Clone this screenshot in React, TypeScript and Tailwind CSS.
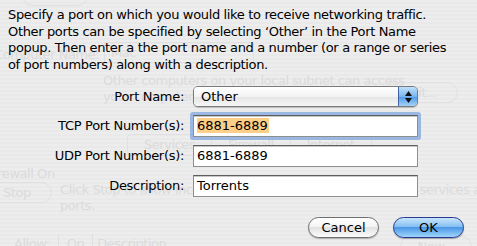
import React from "react";

// faint window content seen through the sheet
function Ghost() {
  return (
    <div className="absolute inset-0 text-[#dbdbdb] text-[13px] tracking-[-0.45px] whitespace-nowrap">
      <div className="absolute left-[22px] top-[-14px] w-[66px] h-[20px] rounded-full border border-[#e0e0e0] text-center leading-[18px]">
        Show All
      </div>
      <div className="absolute left-[-6px] top-[45px]">Computer Name:</div>
      <div className="absolute left-[104px] top-[42px] w-[150px] h-[21px] border border-[#e0e0e0] pl-[6px] leading-[19px]">
        Mac
      </div>
      <div className="absolute left-[103px] top-[71px]">Other computers on your local subnet can access</div>
      <div className="absolute left-[103px] top-[87px]">your computer at Mac.local</div>
      <div className="absolute left-[382px] top-[82px] w-[76px] h-[21px] rounded-full border border-[#e0e0e0] text-center leading-[19px]">
        Edit...
      </div>
      <div className="absolute left-[127px] top-[134px] flex h-[22px] border border-[#e0e0e0] rounded-[4px] leading-[20px]">
        <span className="px-[16px] border-r border-[#e0e0e0]">Services</span>
        <span className="px-[16px] border-r border-[#e0e0e0]">Firewall</span>
        <span className="px-[16px]">Internet</span>
      </div>
      <div className="absolute left-[-12px] top-[164px]">Firewall On</div>
      <div className="absolute left-[-20px] top-[182px] w-[72px] h-[21px] rounded-full border border-[#e0e0e0] pl-[22px] leading-[19px]">
        Stop
      </div>
      <div className="absolute left-[60px] top-[182px] leading-[16px]">
        Click Stop to allow incoming network communication to all services and
        <br />
        ports.
      </div>
      <div className="absolute left-[14px] top-[234px] flex leading-[20px]">
        <span className="pr-[8px]">Allow:</span>
        <span className="border-l border-[#e0e0e0] px-[8px]">On</span>
        <span className="border-l border-[#e0e0e0] px-[4px]">Description</span>
      </div>
      <div className="absolute left-[400px] top-[236px] w-[72px] h-[21px] rounded-full border border-[#e0e0e0] text-center leading-[19px]">
        New...
      </div>
    </div>
  );
}

function Field({ children }: { children: React.ReactNode }) {
  return (
    <div className="h-[22px] bg-white border border-[#8e8e8e] border-t-[#5e5e5e] shadow-[inset_0_1px_0_#c8c8c8] pl-[3px] leading-[20px] text-black">
      {children}
    </div>
  );
}

export default function App() {
  return (
    <div
      className="relative w-[477px] h-[246px] overflow-hidden bg-[repeating-linear-gradient(0deg,#ededed_0px,#ededed_2px,#e9e9e9_2px,#e9e9e9_4px)] text-[13px] text-black"
      style={{ fontFamily: '"DejaVu Sans", "Noto Sans", sans-serif' }}
    >
      <Ghost />

      <div className="relative z-10 pl-[8px] pt-[7px]">
        <p className="leading-[16.5px] tracking-[-0.35px] w-[470px]">
          Specify a port on which you would like to receive networking traffic.
          <br />
          Other ports can be specified by selecting ‘Other’ in the Port Name
          <br />
          popup. Then enter a the port name and a number (or a range or series
          <br />
          of port numbers) along with a description.
        </p>

        <div className="mt-[13px] grid grid-cols-[176px_225px] gap-x-[9px] items-center">
          <div className="text-right tracking-[-0.3px]">Port Name:</div>
          <div className="h-[21px] flex rounded-[5px] border border-[#7a7a7a] shadow-[0_1px_1px_rgba(0,0,0,0.2)] overflow-hidden">
            <div className="flex-1 bg-[linear-gradient(#ffffff,#f3f3f3_50%,#e4e4e4_51%,#f6f6f6)] pl-[7px] leading-[19px]">
              Other
            </div>
            <div className="w-[19px] border-l border-[#3e64a8] bg-[linear-gradient(#bfe0fb,#7ab6ee_50%,#4e98e6_51%,#a3d2f8)] flex flex-col items-center justify-center gap-[2px]">
              <svg width="7" height="5" viewBox="0 0 7 5">
                <path d="M3.5 0L7 5H0z" fill="#111" />
              </svg>
              <svg width="7" height="5" viewBox="0 0 7 5">
                <path d="M0 0h7L3.5 5z" fill="#111" />
              </svg>
            </div>
          </div>

          <div className="mt-[8px] text-right tracking-[-0.3px]">TCP Port Number(s):</div>
          <div className="mt-[8px] shadow-[0_0_0_3px_rgba(126,165,222,0.75)] rounded-[1px]">
            <Field>
              <span className="bg-[#fdcf88] pr-[1px]">6881-6889</span>
            </Field>
          </div>

          <div className="mt-[8px] text-right tracking-[-0.3px]">UDP Port Number(s):</div>
          <div className="mt-[8px]">
            <Field>6881-6889</Field>
          </div>

          <div className="mt-[8px] text-right tracking-[-0.3px]">Description:</div>
          <div className="mt-[8px]">
            <Field>Torrents</Field>
          </div>
        </div>

        <div className="mt-[20px] pr-[13px] flex justify-end gap-[14px]">
          <button className="w-[71px] h-[21px] rounded-full border border-[#6f6f6f] bg-[linear-gradient(#ffffff,#f4f4f4_45%,#e2e2e2_50%,#fbfbfb)] shadow-[0_1px_1px_rgba(0,0,0,0.25)] leading-[19px] text-center">
            Cancel
          </button>
          <button className="w-[71px] h-[21px] rounded-full border border-[#26388f] bg-[linear-gradient(#c9e5fc,#86c0f2_45%,#4b97e6_50%,#9fd6fb)] shadow-[0_1px_1px_rgba(0,0,0,0.3)] leading-[19px] text-center">
            OK
          </button>
        </div>
      </div>
    </div>
  );
}
